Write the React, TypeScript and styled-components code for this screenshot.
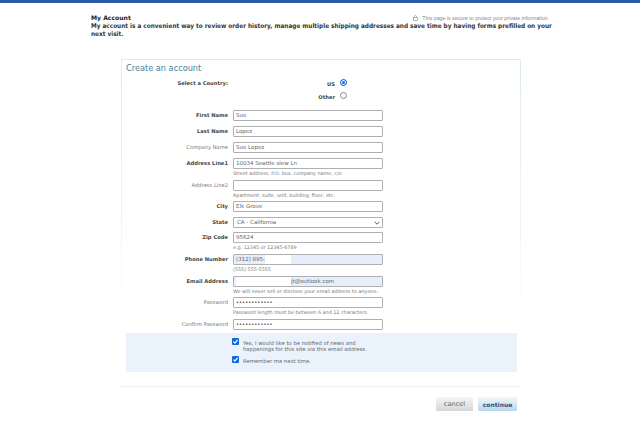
import React from 'react';
import styled, { createGlobalStyle } from 'styled-components';

const GlobalStyle = createGlobalStyle`
  html, body { margin: 0; padding: 0; background: #fff; }
  body { font-family: "DejaVu Sans", Verdana, sans-serif; color: #222; }
  * { box-sizing: border-box; }
`;

const Page = styled.div`
  width: 640px;
  height: 427px;
  overflow: hidden;
  border-top: 3px solid #2a5aa8;
`;

const Header = styled.header`
  margin: 10px 88px 0 91px;
`;

const HeaderTop = styled.div`
  display: flex;
  justify-content: space-between;
  align-items: center;
  height: 9px;
  padding-right: 3px;
`;

const Title = styled.h1`
  margin: 0;
  font-size: 6.1px;
  font-weight: bold;
  color: #222;
`;

const Secure = styled.div`
  display: flex;
  align-items: center;
  gap: 4px;
  font-family: "Liberation Sans", Arial, sans-serif;
  font-size: 5.25px;
  color: #888;
`;

const Intro = styled.p`
  margin: 1px 0 0;
  font-family: "DejaVu Sans Condensed", "DejaVu Sans", sans-serif;
  font-size: 6.4px;
  font-weight: bold;
  line-height: 7.5px;
  color: #333;
`;

const Panel = styled.section`
  margin: 21px 0 0 121px;
  width: 400px;
  height: 360px;
  padding: 0 3px 0 4px;
  border: 1px solid transparent;
  border-image: linear-gradient(#dcebf0, #eef5f7 45%, #fff 72%) 1;
`;

const PanelTitle = styled.h2`
  margin: 3px 0 0;
  font-size: 8.2px;
  font-weight: normal;
  line-height: 11px;
  color: #4a7f98;
`;

const CountryBlock = styled.div`
  display: grid;
  grid-template-columns: 102px 107px auto;
  margin-top: 4px;
  height: 26px;
`;

const CountryLabel = styled.div`
  grid-row: 1 / 3;
  font-size: 5.2px;
  font-weight: bold;
  color: #444;
  text-align: right;
  line-height: 10px;
`;

const CountryName = styled.div`
  grid-column: 2;
  font-size: 5.2px;
  font-weight: bold;
  color: #444;
  text-align: right;
  line-height: 13px;
`;

const RadioCell = styled.div`
  grid-column: 3;
  padding: 1px 0 0 5px;
`;

const Radio = styled.span<{ $checked?: boolean }>`
  display: block;
  width: 7px;
  height: 7px;
  border-radius: 50%;
  border: 1px solid ${(p) => (p.$checked ? '#1a6fe0' : '#888')};
  background: ${(p) => (p.$checked ? '#1a6fe0' : '#fff')};
  box-shadow: ${(p) => (p.$checked ? 'inset 0 0 0 1px #fff' : 'none')};
`;

const Fields = styled.div`
  margin-top: 6px;
`;

const Row = styled.div<{ $gap?: number }>`
  display: grid;
  grid-template-columns: 102px 150px;
  column-gap: 5px;
  margin-bottom: ${(p) => p.$gap ?? 5}px;
`;

const Label = styled.label<{ $strong?: boolean }>`
  font-size: 5.2px;
  font-weight: ${(p) => (p.$strong ? 'bold' : 'normal')};
  color: ${(p) => (p.$strong ? '#444' : '#777')};
  text-align: right;
  line-height: 11px;
`;

const Input = styled.div<{ $filled?: boolean }>`
  height: 11px;
  padding: 0 2px;
  border: 1px solid #b0b0b0;
  border-radius: 1px;
  background: ${(p) => (p.$filled ? '#e6edfb' : '#fff')};
  font-size: 5.5px;
  line-height: 9px;
  color: #666;
  white-space: nowrap;
  overflow: hidden;
`;

const Select = styled(Input)`
  display: flex;
  justify-content: space-between;
  align-items: center;
  padding: 0 2px 0 3px;
`;

const Masked = styled.span<{ $width: number }>`
  display: inline-block;
  width: ${(p) => p.$width}px;
  height: 9px;
  vertical-align: top;
  background: #fff;
`;

const Dots = styled.div`
  font-size: 5px;
  letter-spacing: 0.1px;
  color: #222;
`;

const Hint = styled.div<{ $tall?: boolean }>`
  grid-column: 2;
  height: ${(p) => (p.$tall ? 11 : 10)}px;
  font-size: 4.85px;
  line-height: 6px;
  padding-top: 0.5px;
  color: #777;
  white-space: nowrap;
`;

const OptionsBox = styled.div`
  display: flex;
  flex-direction: column;
  gap: 4px;
  height: 39px;
  padding: 5px 0 0 106px;
  background: #eaf3fc;
`;

const Option = styled.div`
  display: flex;
  gap: 4px;
`;

const CheckMark = styled.span`
  display: flex;
  flex: none;
  align-items: center;
  justify-content: center;
  width: 7px;
  height: 7px;
  border-radius: 1px;
  background: #0f67d8;
`;

const OptionText = styled.span`
  margin-top: 2px;
  font-size: 5.3px;
  line-height: 6px;
  color: #666;
`;

const Divider = styled.hr`
  margin: 14px -3px 0 -5px;
  border: 0;
  border-top: 1px solid #f0f0f0;
`;

const Actions = styled.div`
  display: flex;
  justify-content: flex-end;
  gap: 5px;
  margin-top: 10px;
`;

const Button = styled.button<{ $primary?: boolean }>`
  height: 14px;
  padding: 0;
  width: ${(p) => (p.$primary ? 39 : 37)}px;
  border: 0;
  border-radius: 1px;
  font-family: "DejaVu Sans", Verdana, sans-serif;
  font-size: ${(p) => (p.$primary ? 6 : 6.6)}px;
  font-weight: ${(p) => (p.$primary ? 'bold' : 'normal')};
  color: ${(p) => (p.$primary ? '#2d5478' : '#666')};
  background: ${(p) =>
    p.$primary
      ? 'linear-gradient(#f4f8fc, #b9d4ef)'
      : 'linear-gradient(#f6f6f6, #d6d6d6)'};
`;

const Lock = () => (
  <svg width="5" height="6" viewBox="0 0 10 12" fill="none" stroke="#999" strokeWidth="1.4">
    <path d="M3 5V3a2 2 0 0 1 4 0v2" />
    <rect x="1" y="5" width="8" height="6" />
  </svg>
);

const Check = () => (
  <svg width="7" height="7" viewBox="0 0 10 10" fill="none" stroke="#fff" strokeWidth="1.8">
    <path d="M2 5.2 4.2 7.4 8 2.8" />
  </svg>
);

const Chevron = () => (
  <svg width="6" height="4" viewBox="0 0 10 6" fill="none" stroke="#555" strokeWidth="1.6">
    <path d="M1 1l4 4 4-4" />
  </svg>
);

export default function App() {
  return (
    <Page>
      <GlobalStyle />
      <Header>
        <HeaderTop>
          <Title>My Account</Title>
          <Secure>
            <Lock />
            This page is secure to protect your private information.
          </Secure>
        </HeaderTop>
        <Intro>
          My account is a convenient way to review order history, manage multiple shipping
          addresses and save time by having forms prefilled on your next visit.
        </Intro>
      </Header>
      <Panel>
        <PanelTitle>Create an account</PanelTitle>
        <CountryBlock>
          <CountryLabel>Select a Country:</CountryLabel>
          <CountryName>US</CountryName>
          <RadioCell>
            <Radio $checked />
          </RadioCell>
          <CountryName>Other</CountryName>
          <RadioCell>
            <Radio />
          </RadioCell>
        </CountryBlock>
        <Fields>
          <Row>
            <Label $strong>First Name</Label>
            <Input>Sue</Input>
          </Row>
          <Row>
            <Label $strong>Last Name</Label>
            <Input>Lopez</Input>
          </Row>
          <Row>
            <Label>Company Name</Label>
            <Input>Sue Lopez</Input>
          </Row>
          <Row $gap={0}>
            <Label $strong>Address Line1</Label>
            <Input>10034 Seattle slew Ln</Input>
            <Hint $tall>Street address, P.O. box, company name, c/o</Hint>
          </Row>
          <Row $gap={0}>
            <Label>Address Line2</Label>
            <Input />
            <Hint>Apartment, suite, unit, building, floor, etc.</Hint>
          </Row>
          <Row>
            <Label $strong>City</Label>
            <Input>Elk Grove</Input>
          </Row>
          <Row $gap={4}>
            <Label $strong>State</Label>
            <Select>
              CA - California
              <Chevron />
            </Select>
          </Row>
          <Row $gap={0}>
            <Label $strong>Zip Code</Label>
            <Input>95624</Input>
            <Hint $tall>e.g. 12345 or 12345-6789</Hint>
          </Row>
          <Row $gap={0}>
            <Label $strong>Phone Number</Label>
            <Input $filled>
              (312) 895-
              <Masked $width={26} />
            </Input>
            <Hint $tall>(555) 555-5555</Hint>
          </Row>
          <Row $gap={0}>
            <Label $strong>Email Address</Label>
            <Input $filled>
              <Masked $width={55} />
              jt@outlook.com
            </Input>
            <Hint>We will never sell or disclose your email address to anyone.</Hint>
          </Row>
          <Row $gap={0}>
            <Label>Password</Label>
            <Input>
              <Dots>••••••••••••</Dots>
            </Input>
            <Hint $tall>Password length must be between 6 and 12 characters.</Hint>
          </Row>
          <Row $gap={3}>
            <Label>Confirm Password</Label>
            <Input>
              <Dots>••••••••••••</Dots>
            </Input>
          </Row>
        </Fields>
        <OptionsBox>
          <Option>
            <CheckMark>
              <Check />
            </CheckMark>
            <OptionText>
              Yes, I would like to be notified of news and
              <br />
              happenings for this site via this email address.
            </OptionText>
          </Option>
          <Option>
            <CheckMark>
              <Check />
            </CheckMark>
            <OptionText>Remember me next time.</OptionText>
          </Option>
        </OptionsBox>
        <Divider />
        <Actions>
          <Button>cancel</Button>
          <Button $primary>continue</Button>
        </Actions>
      </Panel>
    </Page>
  );
}
